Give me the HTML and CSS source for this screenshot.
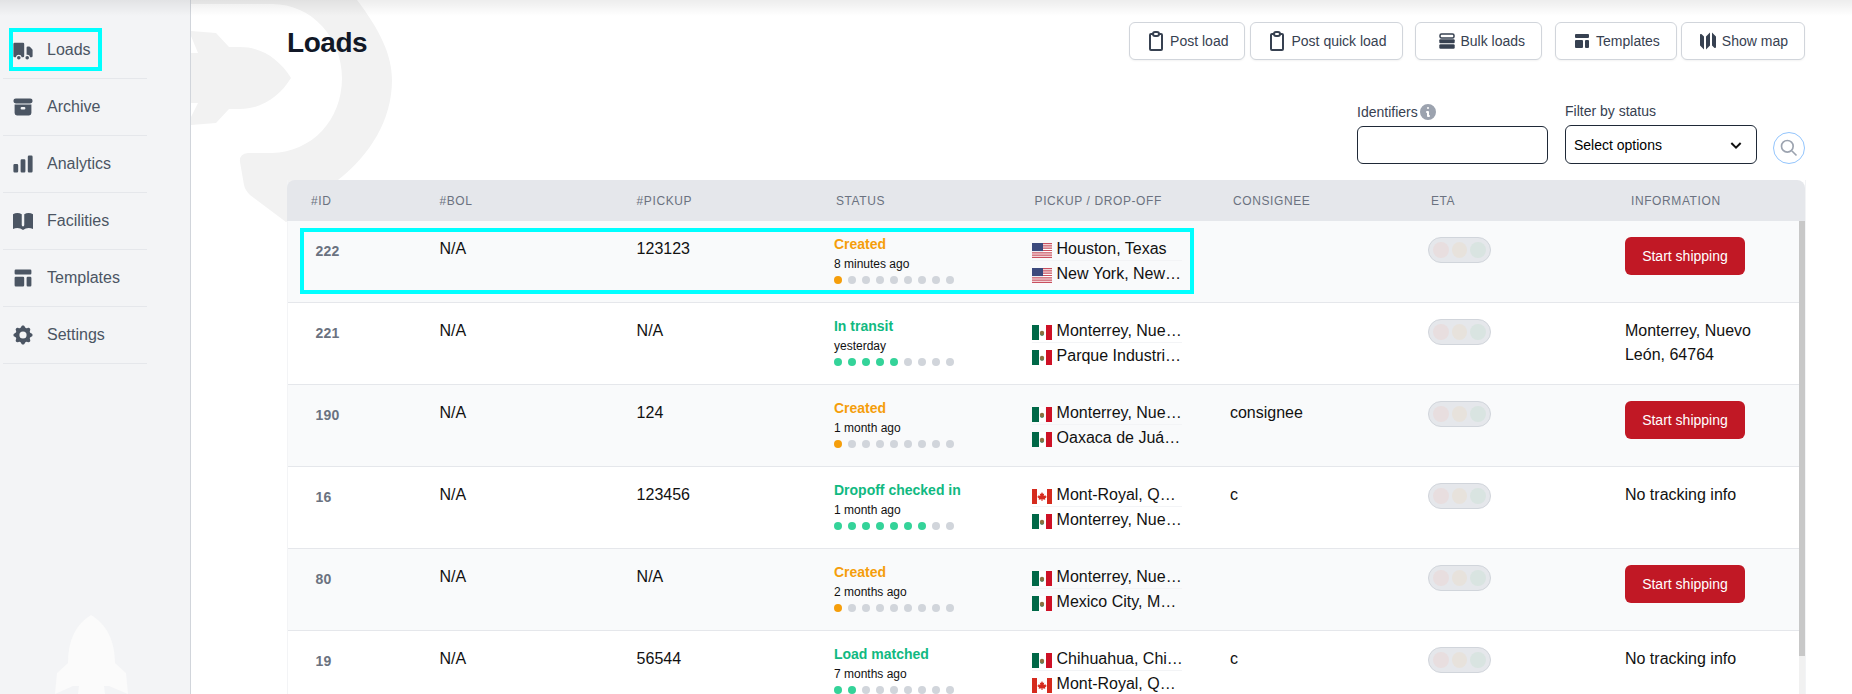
FILE: index.html
```html
<!DOCTYPE html>
<html lang="en">
<head>
    <meta charset="UTF-8">
    <meta name="viewport" content="width=device-width, initial-scale=1.0">
    <title>Loads</title>
    <link rel="stylesheet" href="styles.css">
</head>
<body>
    <svg class="defs" width="0" height="0">
        <symbol id="flag-us" viewBox="0 0 20 15">
            <rect width="20" height="15" fill="#fff"/>
            <path d="M0 0h20v1.2H0zM0 2.3h20v1.2H0zM0 4.6h20v1.2H0zM0 6.9h20v1.2H0zM0 9.2h20v1.2H0zM0 11.5h20v1.2H0zM0 13.8h20V15H0z" fill="#c9505f"/>
            <rect width="11" height="8.1" fill="#3c4a7d"/>
        </symbol>
        <symbol id="flag-mx" viewBox="0 0 20 15">
            <rect width="7" height="15" fill="#006847"/>
            <rect x="7" width="6" height="15" fill="#fff"/>
            <rect x="14" width="6" height="15" fill="#ce1126"/>
            <circle cx="10" cy="8" r="2.2" fill="#8c6f3f"/>
            <path d="M8 9.5q2 2 4 0" stroke="#4d7c5a" fill="none"/>
        </symbol>
        <symbol id="flag-ca" viewBox="0 0 20 15">
            <rect width="20" height="15" fill="#fff"/>
            <rect width="5" height="15" fill="#d52b1e"/>
            <rect x="15" width="5" height="15" fill="#d52b1e"/>
            <path d="M10 3l1 2 1.2-.5-.5 2.6 1.8-.9.4 1.2 1.1.3-2 1.9.3 1.1-2.8-.4V12h-1v-1.700l-2.800.4.3-1.100-2-1.900 1.100-.3.4-1.200 1.800.9-.5-2.600L9 5z" fill="#d52b1e"/>
        </symbol>
        <symbol id="icon-clipboard" viewBox="2 2 20 20">
            <path d="M9 5H7a1 1 0 00-1 1v14a1 1 0 001 1h10a1 1 0 001-1V6a1 1 0 00-1-1h-2M9 5a2 2 0 002 2h2a2 2 0 002-2M9 5a2 2 0 012-2h2a2 2 0 012 2" fill="none" stroke="currentColor" stroke-width="2"/>
        </symbol>
        <symbol id="icon-template" viewBox="0 0 20 20">
            <path d="M3 4a1 1 0 011-1h12a1 1 0 011 1v2a1 1 0 01-1 1H4a1 1 0 01-1-1V4zM3 10a1 1 0 011-1h6a1 1 0 011 1v6a1 1 0 01-1 1H4a1 1 0 01-1-1v-6zM14 9a1 1 0 00-1 1v6a1 1 0 001 1h2a1 1 0 001-1v-6a1 1 0 00-1-1h-2z" fill="currentColor"/>
        </symbol>
    </svg>

    <aside class="sidebar">
        <svg class="sidebar-rocket" viewBox="0 600 191 94" width="191" height="94">
            <path d="M91 615C76 624 68 640 68 663L57 673 55 694 73 686H79L78 694H105L104 686H109L128 694 126 673 115 663C115 640 106 624 91 615Z" fill="#fbfbfb"/>
        </svg>
        <nav class="nav">
            <a class="nav-item">
                <svg viewBox="0 0 20 20" width="24" height="24"><path fill="currentColor" d="M8 16.5a1.5 1.5 0 11-3 0 1.5 1.5 0 013 0zM15 16.5a1.5 1.5 0 11-3 0 1.5 1.5 0 013 0z"/><path fill="currentColor" d="M3 4a1 1 0 00-1 1v10a1 1 0 001 1h1.05a2.5 2.5 0 014.9 0H10a1 1 0 001-1V5a1 1 0 00-1-1H3zM14 7a1 1 0 00-1 1v6.05A2.5 2.5 0 0115.95 16H17a1 1 0 001-1v-5a1 1 0 00-.293-.707l-2-2A1 1 0 0015 7h-1z"/></svg>
                Loads
            </a>
            <a class="nav-item">
                <svg viewBox="0 0 20 20" width="24" height="24"><path fill="currentColor" d="M4 3a2 2 0 100 4h12a2 2 0 100-4H4z"/><path fill="currentColor" fill-rule="evenodd" d="M3 8h14v7a2 2 0 01-2 2H5a2 2 0 01-2-2V8zm5 3a1 1 0 011-1h2a1 1 0 110 2H9a1 1 0 01-1-1z"/></svg>
                Archive
            </a>
            <a class="nav-item">
                <svg viewBox="0 0 20 20" width="24" height="24"><path fill="currentColor" d="M2 11a1 1 0 011-1h2a1 1 0 011 1v5a1 1 0 01-1 1H3a1 1 0 01-1-1v-5zM8 7a1 1 0 011-1h2a1 1 0 011 1v9a1 1 0 01-1 1H9a1 1 0 01-1-1V7zM14 4a1 1 0 011-1h2a1 1 0 011 1v12a1 1 0 01-1 1h-2a1 1 0 01-1-1V4z"/></svg>
                Analytics
            </a>
            <a class="nav-item">
                <svg class="icon-book" viewBox="2 4 16 11.4" preserveAspectRatio="none" width="20" height="17"><path fill="currentColor" d="M9 4.804A7.968 7.968 0 005.5 4c-1.255 0-2.443.29-3.5.804v10A7.969 7.969 0 015.5 14c1.669 0 3.218.51 4.5 1.385A7.962 7.962 0 0114.5 14c1.255 0 2.443.29 3.5.804v-10A7.968 7.968 0 0014.5 4c-1.255 0-2.443.29-3.5.804V12a1 1 0 11-2 0V4.804z"/></svg>
                Facilities
            </a>
            <a class="nav-item">
                <svg width="24" height="24"><use href="#icon-template"/></svg>
                Templates
            </a>
            <a class="nav-item">
                <svg viewBox="0 0 20 20" width="24" height="24"><path fill="currentColor" fill-rule="evenodd" d="M11.49 3.17c-.38-1.56-2.6-1.56-2.98 0a1.532 1.532 0 01-2.286.948c-1.372-.836-2.942.734-2.106 2.106.54.886.061 2.042-.947 2.287-1.561.379-1.561 2.6 0 2.978a1.532 1.532 0 01.947 2.287c-.836 1.372.734 2.942 2.106 2.106a1.532 1.532 0 012.287.947c.379 1.561 2.6 1.561 2.978 0a1.533 1.533 0 012.287-.947c1.372.836 2.942-.734 2.106-2.106a1.533 1.533 0 01.947-2.287c1.561-.379 1.561-2.6 0-2.978a1.532 1.532 0 01-.947-2.287c.836-1.372-.734-2.942-2.106-2.106a1.532 1.532 0 01-2.287-.947zM10 13a3 3 0 100-6 3 3 0 000 6z"/></svg>
                Settings
            </a>
        </nav>
        <div class="mark mark-nav"></div>
    </aside>

    <main class="content">
        <svg class="watermark" viewBox="191 0 220 240" width="220" height="240">
            <path d="M191 0H357C380 30 392 55 392 80 392 120 370 155 338 180L300 215 286 222 250 195Q245 190 244 185L240 162Q239 154 248 153H272C312 152 342 120 342 78 342 38 312 4 272 4H191Z" fill="#f2f2f2"/>
            <path d="M191 31L216 33 229 47H240C262 47 280 60 291 78 280 96 262 109 240 109H229L216 123 191 125V117L198 103H191V53H198L191 36Z" fill="#f2f2f2"/>
        </svg>

        <header class="top">
            <h1 class="title">Loads</h1>
            <div class="actions">
                <button class="btn"><svg width="20" height="20"><use href="#icon-clipboard"/></svg>Post load</button>
                <button class="btn btn-next"><svg width="20" height="20"><use href="#icon-clipboard"/></svg>Post quick load</button>
                <button class="btn btn-bulk">
                    <svg viewBox="0 0 16 16" width="16" height="16"><rect x="1" y="1" width="14" height="4" rx="1.5" fill="none" stroke="currentColor" stroke-width="1.5"/><rect x=".3" y="6.3" width="15.4" height="4" rx="1" fill="currentColor"/><rect x=".3" y="11.3" width="15.4" height="4.4" rx="1.2" fill="currentColor"/></svg>
                    Bulk loads
                </button>
                <button class="btn btn-gap"><svg width="20" height="20"><use href="#icon-template"/></svg>Templates</button>
                <button class="btn btn-map">
                    <svg viewBox="0 0 20 20" width="20" height="20"><path fill="currentColor" d="M12 1.586l-4 4v12.828l4-4V1.586zM3.707 3.293A1 1 0 002 4v10a1 1 0 00.293.707L6 18.414V5.586L3.707 3.293zM17.707 5.293L14 1.586v12.828l2.293 2.293A1 1 0 0018 16V6a1 1 0 00-.293-.707z"/></svg>
                    Show map
                </button>
            </div>
        </header>

        <div class="filters">
            <div class="field">
                <label class="field-label">Identifiers
                    <svg class="info" viewBox="0 0 20 20" width="20" height="20"><path fill="#9ca3af" fill-rule="evenodd" d="M18 10a8 8 0 11-16 0 8 8 0 0116 0zm-7-4a1 1 0 11-2 0 1 1 0 012 0zM9 9a1 1 0 000 2v3a1 1 0 001 1h1a1 1 0 100-2v-3a1 1 0 00-1-1H9z"/></svg>
                </label>
                <input class="input" type="text">
            </div>
            <div class="field field-status">
                <label class="field-label">Filter by status</label>
                <div class="select">
                    Select options
                    <svg viewBox="0 0 24 24" width="16" height="16"><path d="M5 9l7 7 7-7" fill="none" stroke="#111" stroke-width="3"/></svg>
                </div>
            </div>
            <button class="search">
                <svg viewBox="0 0 24 24" width="20" height="20"><path d="M21 21l-6-6m2-5a7 7 0 11-14 0 7 7 0 0114 0z" fill="none" stroke="#9ca3af" stroke-width="2"/></svg>
            </button>
        </div>

        <section class="table">
            <div class="thead cols">
                <div>#ID</div>
                <div>#BOL</div>
                <div>#PICKUP</div>
                <div>STATUS</div>
                <div>PICKUP / DROP-OFF</div>
                <div>CONSIGNEE</div>
                <div>ETA</div>
                <div>INFORMATION</div>
            </div>
            <div class="tbody">
                <div class="rows">
                    <div class="row cols">
                        <div class="cell-id">222</div>
                        <div>N/A</div>
                        <div>123123</div>
                        <div class="cell-status">
                            <div class="status created">Created</div>
                            <div class="when">8 minutes ago</div>
                            <div class="dots created"><i class="on"></i><i></i><i></i><i></i><i></i><i></i><i></i><i></i><i></i></div>
                        </div>
                        <div class="cell-route">
                            <div class="place"><svg class="flag"><use href="#flag-us"/></svg><span>Houston, Texas</span></div>
                            <div class="place"><svg class="flag"><use href="#flag-us"/></svg><span>New York, New York, 10001</span></div>
                        </div>
                        <div></div>
                        <div class="cell-eta"><div class="eta"><i></i><i></i><i></i></div></div>
                        <div class="cell-info"><button class="start">Start shipping</button></div>
                        <div class="mark mark-row"></div>
                    </div>
                    <div class="row cols">
                        <div class="cell-id">221</div>
                        <div>N/A</div>
                        <div>N/A</div>
                        <div class="cell-status">
                            <div class="status moving">In transit</div>
                            <div class="when">yesterday</div>
                            <div class="dots"><i class="on"></i><i class="on"></i><i class="on"></i><i class="on"></i><i class="on"></i><i></i><i></i><i></i><i></i></div>
                        </div>
                        <div class="cell-route">
                            <div class="place"><svg class="flag"><use href="#flag-mx"/></svg><span>Monterrey, Nuevo León, 64764</span></div>
                            <div class="place"><svg class="flag"><use href="#flag-mx"/></svg><span>Parque Industrial Milimex</span></div>
                        </div>
                        <div></div>
                        <div class="cell-eta"><div class="eta"><i></i><i></i><i></i></div></div>
                        <div class="cell-info">Monterrey, Nuevo León, 64764</div>
                    </div>
                    <div class="row cols">
                        <div class="cell-id">190</div>
                        <div>N/A</div>
                        <div>124</div>
                        <div class="cell-status">
                            <div class="status created">Created</div>
                            <div class="when">1 month ago</div>
                            <div class="dots created"><i class="on"></i><i></i><i></i><i></i><i></i><i></i><i></i><i></i><i></i></div>
                        </div>
                        <div class="cell-route">
                            <div class="place"><svg class="flag"><use href="#flag-mx"/></svg><span>Monterrey, Nuevo León, 64764</span></div>
                            <div class="place"><svg class="flag"><use href="#flag-mx"/></svg><span>Oaxaca de Juárez, Oaxaca</span></div>
                        </div>
                        <div>consignee</div>
                        <div class="cell-eta"><div class="eta"><i></i><i></i><i></i></div></div>
                        <div class="cell-info"><button class="start">Start shipping</button></div>
                    </div>
                    <div class="row cols">
                        <div class="cell-id">16</div>
                        <div>N/A</div>
                        <div>123456</div>
                        <div class="cell-status">
                            <div class="status moving">Dropoff checked in</div>
                            <div class="when">1 month ago</div>
                            <div class="dots"><i class="on"></i><i class="on"></i><i class="on"></i><i class="on"></i><i class="on"></i><i class="on"></i><i class="on"></i><i></i><i></i></div>
                        </div>
                        <div class="cell-route">
                            <div class="place"><svg class="flag"><use href="#flag-ca"/></svg><span>Mont-Royal, Quebec</span></div>
                            <div class="place"><svg class="flag"><use href="#flag-mx"/></svg><span>Monterrey, Nuevo León, 64764</span></div>
                        </div>
                        <div>c</div>
                        <div class="cell-eta"><div class="eta"><i></i><i></i><i></i></div></div>
                        <div class="cell-info">No tracking info</div>
                    </div>
                    <div class="row cols">
                        <div class="cell-id">80</div>
                        <div>N/A</div>
                        <div>N/A</div>
                        <div class="cell-status">
                            <div class="status created">Created</div>
                            <div class="when">2 months ago</div>
                            <div class="dots created"><i class="on"></i><i></i><i></i><i></i><i></i><i></i><i></i><i></i><i></i></div>
                        </div>
                        <div class="cell-route">
                            <div class="place"><svg class="flag"><use href="#flag-mx"/></svg><span>Monterrey, Nuevo León, 64764</span></div>
                            <div class="place"><svg class="flag"><use href="#flag-mx"/></svg><span>Mexico City, Mexico</span></div>
                        </div>
                        <div></div>
                        <div class="cell-eta"><div class="eta"><i></i><i></i><i></i></div></div>
                        <div class="cell-info"><button class="start">Start shipping</button></div>
                    </div>
                    <div class="row cols">
                        <div class="cell-id">19</div>
                        <div>N/A</div>
                        <div>56544</div>
                        <div class="cell-status">
                            <div class="status moving">Load matched</div>
                            <div class="when">7 months ago</div>
                            <div class="dots"><i class="on"></i><i class="on"></i><i></i><i></i><i></i><i></i><i></i><i></i><i></i></div>
                        </div>
                        <div class="cell-route">
                            <div class="place"><svg class="flag"><use href="#flag-mx"/></svg><span>Chihuahua, Chihuahua</span></div>
                            <div class="place"><svg class="flag"><use href="#flag-ca"/></svg><span>Mont-Royal, Quebec</span></div>
                        </div>
                        <div>c</div>
                        <div class="cell-eta"><div class="eta"><i></i><i></i><i></i></div></div>
                        <div class="cell-info">No tracking info</div>
                    </div>
                </div>
                <div class="scrollbar"><div class="thumb"></div></div>
            </div>
        </section>
    </main>

    <div class="top-shade"></div>
</body>
</html>
```

FILE: styles.css
```css
* {
    box-sizing: border-box;
}
html, body {
    height: 100%;
}
body {
    margin: 0;
    display: flex;
    height: 694px;
    overflow: hidden;
    background-color: #fff;
    color: #111;
    font-family: "Liberation Sans", Arial, sans-serif;
    font-size: 16px;
}
.defs {
    position: absolute;
}
.top-shade {
    position: absolute;
    top: 0;
    left: 0;
    right: 0;
    height: 16px;
    background: linear-gradient(rgba(0, 0, 0, 0.07), rgba(0, 0, 0, 0));
    pointer-events: none;
}

/* sidebar */
.sidebar {
    position: relative;
    flex: 0 0 191px;
    padding: 22px 0 0 3px;
    background-color: #f3f4f6;
    border-right: 1px solid #d1d5db;
}
.sidebar-rocket {
    position: absolute;
    left: 0;
    bottom: 0;
}
.nav {
    position: relative;
    width: 144px;
}
.nav-item {
    display: flex;
    align-items: center;
    gap: 12px;
    height: 57px;
    padding-left: 8px;
    color: #4b5563;
    border-bottom: 1px solid #e5e7eb;
}
.icon-book {
    margin: 0 2px;
}
.mark {
    position: absolute;
    border: 4px solid #0ff;
    pointer-events: none;
}
.mark-nav {
    left: 9px;
    top: 28px;
    width: 93px;
    height: 43px;
}

/* main column */
.content {
    position: relative;
    flex: 1;
    min-width: 0;
    padding: 22px 47px 0 96px;
}
.watermark {
    position: absolute;
    left: 0;
    top: 0;
}
.top {
    position: relative;
    display: flex;
    justify-content: space-between;
    height: 38px;
}
.title {
    margin: 3px 0 0;
    font-size: 28px;
    line-height: 36px;
    letter-spacing: -0.45px;
    color: #111827;
}
.actions {
    display: flex;
}
.btn {
    display: flex;
    align-items: center;
    gap: 4px;
    height: 38px;
    padding: 0 16px;
    background-color: #fff;
    border: 1px solid #d1d5db;
    border-radius: 6px;
    box-shadow: 0 1px 2px rgba(0, 0, 0, 0.05);
    color: #374151;
    font-family: inherit;
    font-size: 14px;
    white-space: nowrap;
}
.btn-next {
    margin-left: 5px;
}
.btn-bulk {
    margin-left: 12px;
    padding-left: 23px;
    gap: 5px;
}
.btn-gap {
    margin-left: 13px;
}
.btn-map {
    margin-left: 4px;
}

/* filters */
.filters {
    position: relative;
    display: flex;
    justify-content: flex-end;
    align-items: flex-end;
    gap: 17px;
    margin-top: 41px;
    margin-bottom: 16px;
}
.field {
    width: 191px;
}
.field-status {
    width: 192px;
}
.field-label {
    display: flex;
    align-items: center;
    height: 20px;
    margin-bottom: 4px;
    font-size: 14px;
    color: #374151;
}
.input {
    display: block;
    width: 100%;
    height: 38px;
    background-color: #fff;
    border: 1px solid #1f2937;
    border-radius: 6px;
}
.select {
    display: flex;
    justify-content: space-between;
    align-items: center;
    height: 39px;
    padding: 0 12px 0 8px;
    background-color: #fff;
    border: 1px solid #1f2937;
    border-radius: 6px;
    font-size: 14px;
    color: #000;
}
.search {
    display: flex;
    align-items: center;
    justify-content: center;
    width: 32px;
    height: 32px;
    margin-left: -1px;
    padding: 0;
    background-color: #fff;
    border: 1px solid #93c5fd;
    border-radius: 50%;
}

/* table */
.table {
    position: relative;
    border-left: 1px solid #f3f4f6;
    box-shadow: 1px 0 0 #f3f4f6;
}
.cols {
    display: grid;
    grid-template-columns: 127.4px 197.2px 199.4px 198.6px 198.4px 198px 200px 1fr;
}
.thead {
    height: 41px;
    margin-left: -1px;
    padding-left: 1px;
    align-items: center;
    background-color: #e5e7eb;
    border-radius: 8px 8px 0 0;
    color: #6b7280;
    font-size: 12px;
    letter-spacing: 0.6px;
}
.thead > div {
    padding-left: 24px;
    white-space: nowrap;
}
.thead > div:first-child {
    padding-left: 23px;
}
.tbody {
    display: flex;
}
.rows {
    flex: 1;
    min-width: 0;
}
.scrollbar {
    flex: 0 0 6px;
    background-color: #f1f1f1;
}
.thumb {
    height: 435px;
    background-color: #c8c8c8;
}
.row {
    position: relative;
    height: 82px;
    border-bottom: 1px solid #e5e7eb;
    line-height: 24px;
}
.row:nth-child(odd) {
    background-color: #f9fafb;
}
.row > div {
    padding-top: 16px;
    padding-left: 24px;
}
.row > div:nth-child(n+4) {
    padding-left: 21px;
}
.row > div.cell-status {
    padding-top: 13px;
    padding-left: 22px;
}
.row > div.cell-id {
    padding-top: 20px;
    padding-left: 27.5px;
    color: #6b7280;
    font-size: 14px;
    font-weight: bold;
    line-height: 20px;
    letter-spacing: 0.2px;
}
.row > div.cell-info {
    padding-left: 18px;
    width: 170px;
}
.status {
    font-size: 14px;
    font-weight: bold;
    line-height: 20px;
}
.status.created {
    color: #f59e0b;
}
.status.moving {
    color: #10b981;
}
.when {
    margin-top: 2px;
    font-size: 12px;
    line-height: 16px;
}
.dots {
    display: flex;
    gap: 6px;
    margin-top: 4px;
}
.dots i {
    width: 8px;
    height: 8px;
    border-radius: 50%;
    background-color: #d1d5db;
}
.dots i.on {
    background-color: #34d399;
}
.dots.created i.on {
    background-color: #f59e0b;
}
.row > div.cell-route {
    padding-top: 15px;
}
.place {
    display: flex;
    width: 150px;
    height: 25px;
}
.place:first-child {
    border-bottom: 1px solid #f3f4f6;
}
.place span {
    flex: 0 0 127px;
    height: 24px;
    margin-top: 1px;
    overflow: hidden;
    white-space: nowrap;
    text-overflow: ellipsis;
}
.flag {
    flex: 0 0 20px;
    width: 20px;
    height: 15px;
    margin: 7px 5px 0 0;
}
.eta {
    display: flex;
    flex: none;
    gap: 3px;
    width: 63px;
    height: 26px;
    padding: 4px;
    background-color: #e5e7eb;
    border: 1px solid #d1d5db;
    border-radius: 13px;
}
.eta i {
    flex: 0 0 15.700px;
    height: 16px;
    border-radius: 50%;
    background-color: #e8dedf;
}
.eta i:nth-child(2) {
    background-color: #e7e2dc;
}
.eta i:nth-child(3) {
    background-color: #d9e4e1;
}
.start {
    width: 120px;
    height: 38px;
    padding: 0;
    background-color: #c11825;
    border: none;
    border-radius: 6px;
    color: #fff;
    font-family: inherit;
    font-size: 14px;
}
.row > div.mark-row {
    left: 12px;
    top: 7px;
    width: 894px;
    height: 66px;
    padding: 0;
}
```
